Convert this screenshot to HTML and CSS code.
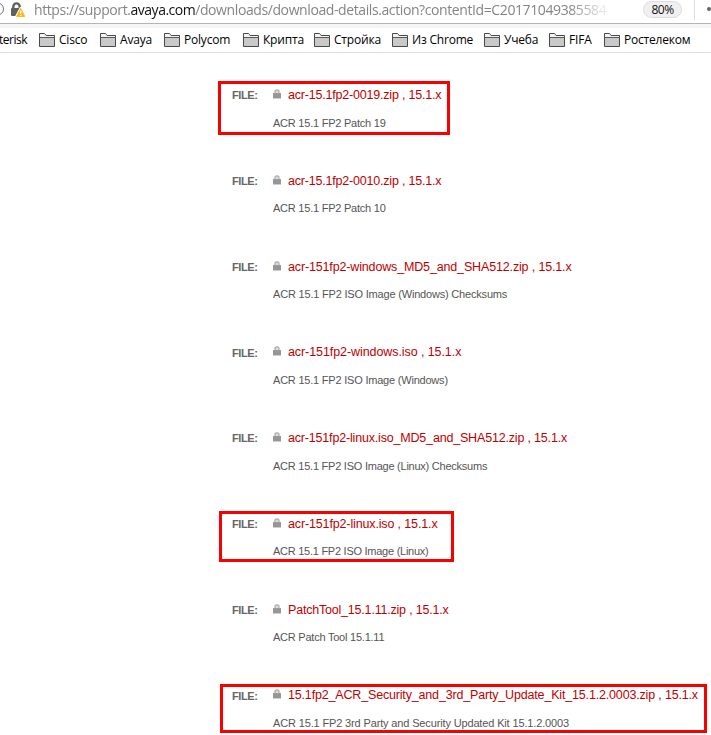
FILE: index.html
```html
<!DOCTYPE html>
<html lang="ru">
<head>
<meta charset="utf-8">
<title>Avaya Support Downloads</title>
<link rel="stylesheet" href="styles.css">
</head>
<body>
<svg class="defs" width="0" height="0">
  <symbol id="folder" viewBox="0 0 16 14">
    <path d="M.5 13.5V.5h5l1.6 2h8.4v11z" fill="#c9c9c9" stroke="#484848"/>
    <path d="M1 1h4.3l1.6 2H15v1H1z" fill="#f4f4f4"/>
    <path d="M.5 4.5h15" stroke="#5a5a5a"/>
  </symbol>
  <symbol id="lock" viewBox="0 0 8 10">
    <path d="M2 5V2.4Q2 .8 4 .8t2 1.6V5" fill="#ddd" stroke="#aaa" stroke-width="1.2"/>
    <path d="M0 4h8v5.5H0z" fill="#9c9c9c"/>
    <path d="M0 6h8M0 8h8" stroke="#8a8a8a" stroke-width=".6"/>
  </symbol>
</svg>
<header class="address">
  <svg class="security" width="28" height="20" viewBox="0 0 28 20">
    <circle cx="-2.5" cy="9" r="6" fill="none" stroke="#777"/>
    <path d="M13.3 9V6.6a3.2 3.2 0 0 1 6.4 0V9" fill="none" stroke="#606060" stroke-width="2.4"/>
    <rect x="11" y="8" width="10" height="8" rx="1" fill="#606060"/>
    <path d="M20.7 8.3 25 16.3H16.4z" fill="#ffb514" stroke="#fff" stroke-width="2.4" stroke-linejoin="round"/>
    <path d="M20.7 8.5 24.7 16.4H16.7z" fill="#ffb514" stroke="#ffb514" stroke-linejoin="round"/>
    <path d="M20.7 10.4v3.4M20.7 14.7v1.4" stroke="#fff" stroke-width="1.3"/>
  </svg>
  <div class="url"><span class="scheme">https://support.</span><span class="host">avaya.com</span><span class="path">/downloads/download-details.action?contentId=C20171049385584</span></div>
  <span class="zoom">80%</span>
  <span class="divider"></span>
  <span class="dot"></span>
</header>
<nav class="bookmarks">
  <span class="first">terisk</span>
  <span class="mark w61"><svg><use href="#folder"/></svg>Cisco</span>
  <span class="mark w64"><svg><use href="#folder"/></svg>Avaya</span>
  <span class="mark w79"><svg><use href="#folder"/></svg>Polycom</span>
  <span class="mark w71"><svg><use href="#folder"/></svg>Крипта</span>
  <span class="mark w78"><svg><use href="#folder"/></svg>Стройка</span>
  <span class="mark w92"><svg><use href="#folder"/></svg>Из Chrome</span>
  <span class="mark w65"><svg><use href="#folder"/></svg>Учеба</span>
  <span class="mark w55"><svg><use href="#folder"/></svg>FIFA</span>
  <span class="mark"><svg><use href="#folder"/></svg>Ростелеком</span>
</nav>
<main class="files">
  <section class="file snug"><b>FILE:</b><svg><use href="#lock"/></svg><a>acr-15.1fp2-0019.zip , 15.1.x</a><p>ACR 15.1 FP2 Patch 19</p><i class="frame patch"></i></section>
  <section class="file snug"><b>FILE:</b><svg><use href="#lock"/></svg><a>acr-15.1fp2-0010.zip , 15.1.x</a><p>ACR 15.1 FP2 Patch 10</p></section>
  <section class="file"><b>FILE:</b><svg><use href="#lock"/></svg><a>acr-151fp2-windows_MD5_and_SHA512.zip , 15.1.x</a><p>ACR 15.1 FP2 ISO Image (Windows) Checksums</p></section>
  <section class="file windows"><b>FILE:</b><svg><use href="#lock"/></svg><a>acr-151fp2-windows.iso , 15.1.x</a><p>ACR 15.1 FP2 ISO Image (Windows)</p></section>
  <section class="file checksums"><b>FILE:</b><svg><use href="#lock"/></svg><a>acr-151fp2-linux.iso_MD5_and_SHA512.zip , 15.1.x</a><p>ACR 15.1 FP2 ISO Image (Linux) Checksums</p></section>
  <section class="file iso"><b>FILE:</b><svg><use href="#lock"/></svg><a>acr-151fp2-linux.iso , 15.1.x</a><p>ACR 15.1 FP2 ISO Image (Linux)</p><i class="frame linux"></i></section>
  <section class="file snug"><b>FILE:</b><svg><use href="#lock"/></svg><a>PatchTool_15.1.11.zip , 15.1.x</a><p>ACR Patch Tool 15.1.11</p></section>
  <section class="file last"><b>FILE:</b><svg><use href="#lock"/></svg><a>15.1fp2_ACR_Security_and_3rd_Party_Update_Kit_15.1.2.0003.zip , 15.1.x</a><p>ACR 15.1 FP2 3rd Party and Security Updated Kit 15.1.2.0003</p><i class="frame kit"></i></section>
</main>
</body>
</html>
```
FILE: styles.css
```css
* { box-sizing: border-box; }
body { margin: 0; width: 711px; height: 735px; overflow: hidden; background: #fff; font-family: "Liberation Sans", Arial, sans-serif; }
.defs { position: absolute; }
.address { display: flex; height: 24px; border-bottom: 1px solid #b5b5b5; overflow: hidden; }
.security { flex: none; margin-right: 6px; }
.url { width: 575px; height: 20px; overflow: hidden; white-space: nowrap; font: 14px/20px "Open Sans", sans-serif; letter-spacing: -.4px; color: #858585; -webkit-mask-image: linear-gradient(90deg, #000 535px, transparent 577px); mask-image: linear-gradient(90deg, #000 535px, transparent 577px); }
.scheme, .host, .path { display: inline-block; }
.host { color: #111; letter-spacing: -.5px; }
.zoom { width: 39px; height: 17px; margin: 1px 0 0 35px; border: 1px solid #ddd; border-radius: 9px; background: #f0f0f0; text-align: center; font: 12px/16px "Open Sans", sans-serif; letter-spacing: -.6px; color: #111; }
.divider { width: 1px; height: 20px; margin-left: 12px; background: #ddd; }
.dot { width: 4px; height: 4px; margin: 7px 0 0 12px; border-radius: 50%; background: #666; }
.bookmarks { display: flex; height: 29px; padding-top: 4px; border-top: 4px solid #f5f5f5; border-bottom: 1px solid #ddd; white-space: nowrap; font: 12px/16px "Open Sans", sans-serif; letter-spacing: -.2px; color: #000; }
.first { width: 39px; margin-left: -1px; margin-right: 1px; letter-spacing: -.5px; }
.mark { display: flex; flex: none; }
.mark svg { width: 16px; height: 14px; margin: 1px 4px 0 0; }
.w61 { width: 61px; }
.w64 { width: 64px; }
.w79 { width: 79px; }
.w71 { width: 71px; }
.w78 { width: 78px; }
.w92 { width: 92px; }
.w65 { width: 65px; }
.w55 { width: 55px; }
.files { padding: 34px 0 0 232px; }
.file { position: relative; display: grid; grid-template-columns: 41px 15px max-content; grid-template-rows: 16px 16px; row-gap: 12px; height: 85.75px; white-space: nowrap; }
.file b { margin-top: .3px; font-size: 11px; line-height: 17px; letter-spacing: -.4px; color: #666; }
.file svg { width: 8px; height: 10px; margin-top: 2px; }
.file a { font-size: 12.5px; line-height: 16px; letter-spacing: -.15px; color: #c00000; }
.file p { grid-column: 2 / 4; margin: -.4px 0 0; font-size: 11px; line-height: 16px; letter-spacing: -.19px; color: #555; }
.snug a { letter-spacing: -.2px; }
.snug p { letter-spacing: -.23px; }
.windows a { letter-spacing: -.08px; }
.windows p { letter-spacing: -.21px; }
.checksums a { letter-spacing: -.18px; }
.checksums p { letter-spacing: -.24px; }
.iso a { letter-spacing: -.14px; }
.iso p { letter-spacing: -.26px; }
.last { height: 46px; }
.last a { letter-spacing: -.17px; }
.last p { letter-spacing: -.145px; }
.frame { position: absolute; border: 3px solid #fa0000; }
.patch { left: -14px; top: -6px; width: 232px; height: 54px; }
.linux { left: -13px; top: -5px; width: 235px; height: 51px; }
.kit { left: -12px; top: -3px; width: 487px; height: 49px; }
```
